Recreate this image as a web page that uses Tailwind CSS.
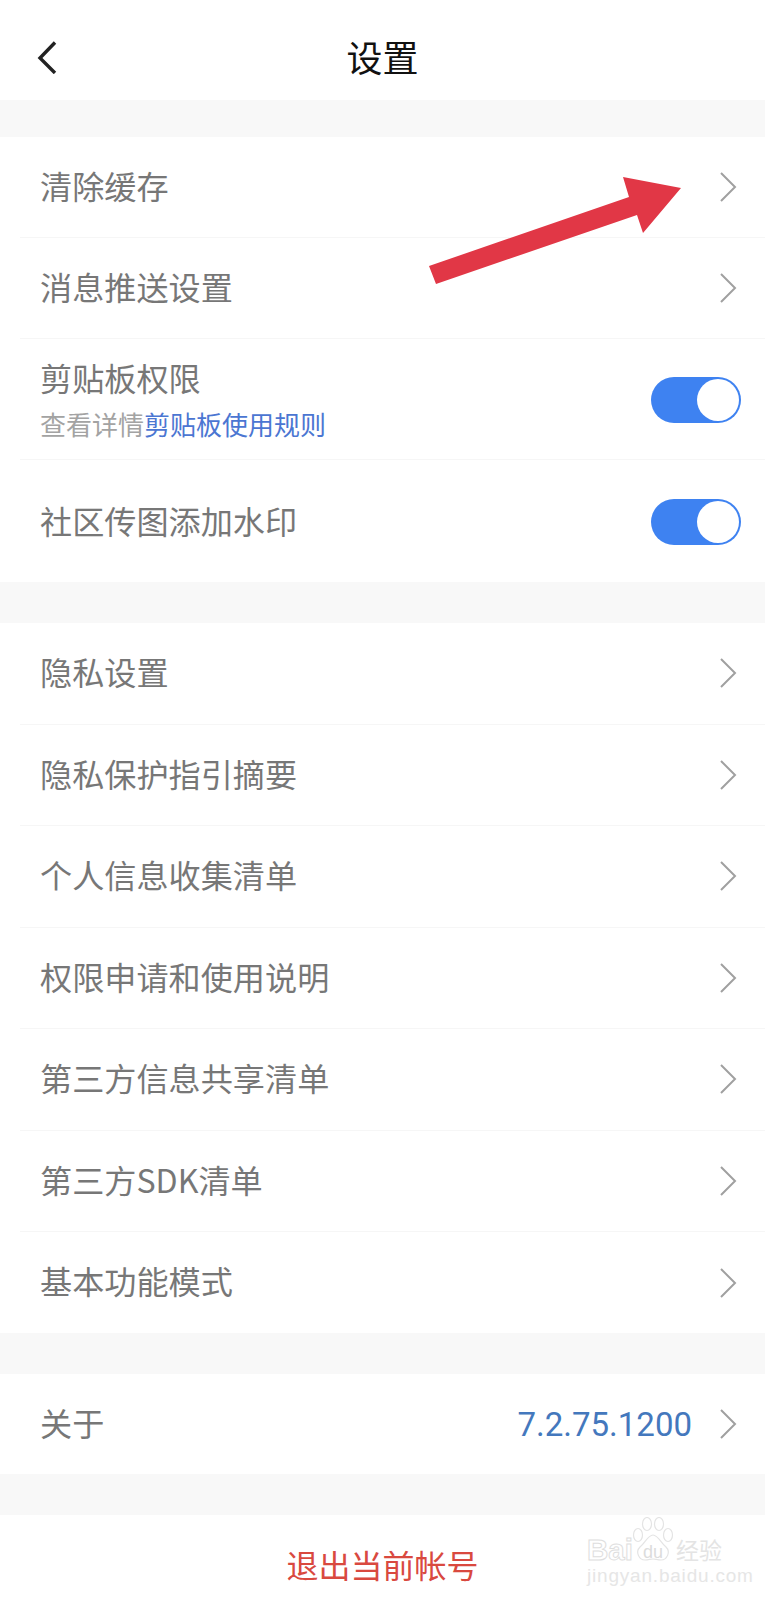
<!DOCTYPE html>
<html lang="zh">
<head>
    <meta charset="UTF-8">
    <meta name="viewport" content="width=device-width, initial-scale=1.0">
    <title>设置</title>
    <script src="https://cdn.jsdelivr.net/npm/@tailwindcss/browser@4"></script>
</head>
<body class="bg-white font-['Noto_Sans_CJK_SC','Noto_Sans',sans-serif]">
    <div class="relative w-[765px] h-[1600px] overflow-hidden bg-[#f8f8f8]">
        <!-- 标题栏 -->
        <header class="relative flex items-center justify-center h-[100px] bg-white">
            <svg class="absolute left-[37px] top-[41px]" width="20" height="33" viewBox="0 0 20 33" fill="none" stroke="#222" stroke-width="3.4"><path d="M18 1.5 3 17l15 15"/></svg>
            <h1 class="text-[36px] leading-none text-[#111] mt-[12px]">设置</h1>
        </header>

        <section class="mt-[37px] bg-white">
            <div class="flex items-center justify-between h-[101px] ml-5 pl-5 pr-7 border-b border-[#f6f6f6]">
                <span class="text-[32.15px] mb-[4px] text-[#777]">清除缓存</span>
                <svg width="17" height="30" viewBox="0 0 17 30" fill="none" stroke="#a0a0a0" stroke-width="2"><path d="M1 1l14 14L1 29"/></svg>
            </div>
            <div class="flex items-center justify-between h-[101px] ml-5 pl-5 pr-7 border-b border-[#f6f6f6]">
                <span class="text-[32.15px] mb-[4px] text-[#777]">消息推送设置</span>
                <svg width="17" height="30" viewBox="0 0 17 30" fill="none" stroke="#a0a0a0" stroke-width="2"><path d="M1 1l14 14L1 29"/></svg>
            </div>
            <div class="flex items-center justify-between h-[121px] ml-5 pl-5 pr-6 border-b border-[#f6f6f6]">
                <div class="flex flex-col gap-[6px]">
                    <span class="text-[32.15px] leading-[44px] text-[#777]">剪贴板权限</span>
                    <span class="text-[26px] leading-[38px] text-[#a3a3a3]">查看详情<span class="text-[#4b76d2]">剪贴板使用规则</span></span>
                </div>
                <div class="flex items-center justify-end w-[90px] h-[46px] mt-[1px] pr-[2px] rounded-full bg-[#3e82f1]">
                    <div class="w-[42px] h-[42px] rounded-full bg-white"></div>
                </div>
            </div>
            <div class="flex items-center justify-between h-[122px] ml-5 pl-5 pr-6">
                <span class="text-[32.15px] mb-[2px] text-[#777]">社区传图添加水印</span>
                <div class="flex items-center justify-end w-[90px] h-[46px] mt-[1px] pr-[2px] rounded-full bg-[#3e82f1]">
                    <div class="w-[42px] h-[42px] rounded-full bg-white"></div>
                </div>
            </div>
        </section>

        <section class="mt-[41px] bg-white">
            <div class="flex items-center justify-between h-[101.5px] ml-5 pl-5 pr-7 border-b border-[#f6f6f6]">
                <span class="text-[32.15px] mb-[4px] text-[#777]">隐私设置</span>
                <svg width="17" height="30" viewBox="0 0 17 30" fill="none" stroke="#a0a0a0" stroke-width="2"><path d="M1 1l14 14L1 29"/></svg>
            </div>
            <div class="flex items-center justify-between h-[101.5px] ml-5 pl-5 pr-7 border-b border-[#f6f6f6]">
                <span class="text-[32.15px] mb-[4px] text-[#777]">隐私保护指引摘要</span>
                <svg width="17" height="30" viewBox="0 0 17 30" fill="none" stroke="#a0a0a0" stroke-width="2"><path d="M1 1l14 14L1 29"/></svg>
            </div>
            <div class="flex items-center justify-between h-[101.5px] ml-5 pl-5 pr-7 border-b border-[#f6f6f6]">
                <span class="text-[32.15px] mb-[4px] text-[#777]">个人信息收集清单</span>
                <svg width="17" height="30" viewBox="0 0 17 30" fill="none" stroke="#a0a0a0" stroke-width="2"><path d="M1 1l14 14L1 29"/></svg>
            </div>
            <div class="flex items-center justify-between h-[101.5px] ml-5 pl-5 pr-7 border-b border-[#f6f6f6]">
                <span class="text-[32.15px] mb-[4px] text-[#777]">权限申请和使用说明</span>
                <svg width="17" height="30" viewBox="0 0 17 30" fill="none" stroke="#a0a0a0" stroke-width="2"><path d="M1 1l14 14L1 29"/></svg>
            </div>
            <div class="flex items-center justify-between h-[101.5px] ml-5 pl-5 pr-7 border-b border-[#f6f6f6]">
                <span class="text-[32.15px] mb-[4px] text-[#777]">第三方信息共享清单</span>
                <svg width="17" height="30" viewBox="0 0 17 30" fill="none" stroke="#a0a0a0" stroke-width="2"><path d="M1 1l14 14L1 29"/></svg>
            </div>
            <div class="flex items-center justify-between h-[101.5px] ml-5 pl-5 pr-7 border-b border-[#f6f6f6]">
                <span class="text-[32.15px] mb-[4px] text-[#777]">第三方SDK清单</span>
                <svg width="17" height="30" viewBox="0 0 17 30" fill="none" stroke="#a0a0a0" stroke-width="2"><path d="M1 1l14 14L1 29"/></svg>
            </div>
            <div class="flex items-center justify-between h-[101px] ml-5 pl-5 pr-7">
                <span class="text-[32.15px] mb-[4px] text-[#777]">基本功能模式</span>
                <svg width="17" height="30" viewBox="0 0 17 30" fill="none" stroke="#a0a0a0" stroke-width="2"><path d="M1 1l14 14L1 29"/></svg>
            </div>
        </section>

        <section class="mt-[41px] bg-white">
            <div class="flex items-center justify-between h-[100px] ml-5 pl-5 pr-7">
                <span class="text-[32.15px] mb-[4px] text-[#777]">关于</span>
                <div class="flex items-center gap-[28px]">
                    <span class="font-['Roboto',sans-serif] text-[33px] mt-[2px] text-[#4478bd]">7.2.75.1200</span>
                    <svg width="17" height="30" viewBox="0 0 17 30" fill="none" stroke="#a0a0a0" stroke-width="2"><path d="M1 1l14 14L1 29"/></svg>
                </div>
            </div>
        </section>

        <div class="flex justify-center mt-[41px] h-[90px] pt-[25px] bg-white">
            <span class="text-[32px] leading-[48px] text-[#d9493f]">退出当前帐号</span>
        </div>

        <!-- 红色箭头标注 -->
        <svg class="absolute left-0 top-0" width="765" height="300" viewBox="0 0 765 300"><polygon fill="#e13746" points="681,188 623,177 629,197 429,266 436,284 637,215 643,233"/></svg>

        <!-- 水印 -->
        <div class="absolute left-[587px] top-[1517px] w-[136px] text-[#e4e4e4]">
            <svg class="absolute left-[45px] top-0" width="42" height="44" viewBox="0 0 42 44" fill="none" stroke="#e4e4e4" stroke-width="1.2">
                <ellipse cx="6" cy="18" rx="4.5" ry="6.5"/><ellipse cx="15" cy="7" rx="4.5" ry="6.5"/><ellipse cx="27" cy="7" rx="4.5" ry="6.5"/><ellipse cx="36" cy="18" rx="4.5" ry="6.5"/>
                <path d="M21 18c-5 0-8 8-13 12-5 5-1 13 5 13 3 0 6-1 8-1s5 1 8 1c6 0 10-8 5-13-5-4-8-12-13-12z"/>
            </svg>
            <div class="relative flex items-center h-[29px] mt-[18px]">
                <span class="w-[45px] font-['Liberation_Sans',sans-serif] font-bold text-[29.5px] leading-none text-white [-webkit-text-stroke:1px_#dedede]">Bai</span>
                <span class="w-[42px] text-center font-['Liberation_Sans',sans-serif] text-[18px] leading-none text-[#dcdcdc] mt-[4px]">du</span>
                <span class="ml-[2px] text-[23px] leading-none whitespace-nowrap">经验</span>
            </div>
            <div class="mt-[2px] font-['Liberation_Sans',sans-serif] text-[19px] tracking-[0.8px] leading-[20px] whitespace-nowrap text-[#e6e6e6]">jingyan.baidu.com</div>
        </div>
    </div>
</body>
</html>
